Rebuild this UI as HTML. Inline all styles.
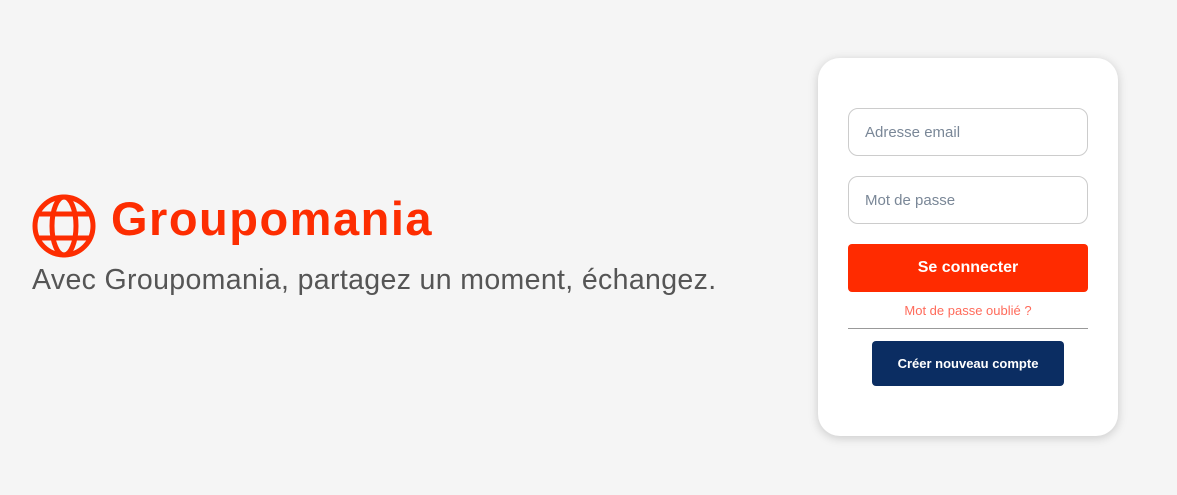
<!DOCTYPE html>
<html><head><meta charset="utf-8"><style>
*{box-sizing:border-box;margin:0;padding:0}
body{width:1177px;height:495px;background:#f5f5f5;font-family:"Liberation Sans",sans-serif;position:relative;overflow:hidden}
.logo{position:absolute;left:32px;top:194px}
.title{position:absolute;left:111px;top:191px;font-size:47px;font-weight:bold;color:#fd2d01;letter-spacing:1.5px}
.sub{position:absolute;left:32px;top:264px;font-size:28.5px;color:#555;letter-spacing:0.35px}
.card{position:absolute;left:818px;top:58px;width:300px;height:378px;background:#fff;border-radius:22px;box-shadow:0 2px 10px rgba(0,0,0,0.18)}
.inp{position:absolute;left:30px;width:240px;height:48px;border:1px solid #ccc;border-radius:10px;padding-left:16px;line-height:48px;font-size:15px;color:#7a8797}
.btn{position:absolute;left:30px;top:186px;width:240px;height:48px;background:#ff2b00;border-radius:4px;color:#fff;font-weight:bold;font-size:16px;text-align:center;line-height:48px}
.link{position:absolute;left:0;width:300px;top:245px;text-align:center;font-size:13px;color:#ff6b5b}
.hr{position:absolute;left:30px;top:270px;width:240px;height:1px;background:#999}
.btn2{position:absolute;left:54px;top:283px;width:192px;height:45px;background:#0b2d62;border-radius:4px;color:#fff;font-weight:bold;font-size:13px;text-align:center;line-height:45px}
</style></head><body>
<svg class="logo" width="64" height="64" viewBox="0 0 64 64" fill="none" stroke="#fd2d01" stroke-width="5">
<circle cx="32" cy="32" r="29"/>
<ellipse cx="32" cy="32" rx="12" ry="29"/>
<line x1="5" y1="20" x2="59" y2="20"/>
<line x1="5" y1="44" x2="59" y2="44"/>
</svg>
<div class="title">Groupomania</div>
<div class="sub">Avec Groupomania, partagez un moment, échangez.</div>
<div class="card">
<div class="inp" style="top:50px">Adresse email</div>
<div class="inp" style="top:118px">Mot de passe</div>
<div class="btn">Se connecter</div>
<div class="link">Mot de passe oublié ?</div>
<div class="hr"></div>
<div class="btn2">Créer nouveau compte</div>
</div>
</body></html>
